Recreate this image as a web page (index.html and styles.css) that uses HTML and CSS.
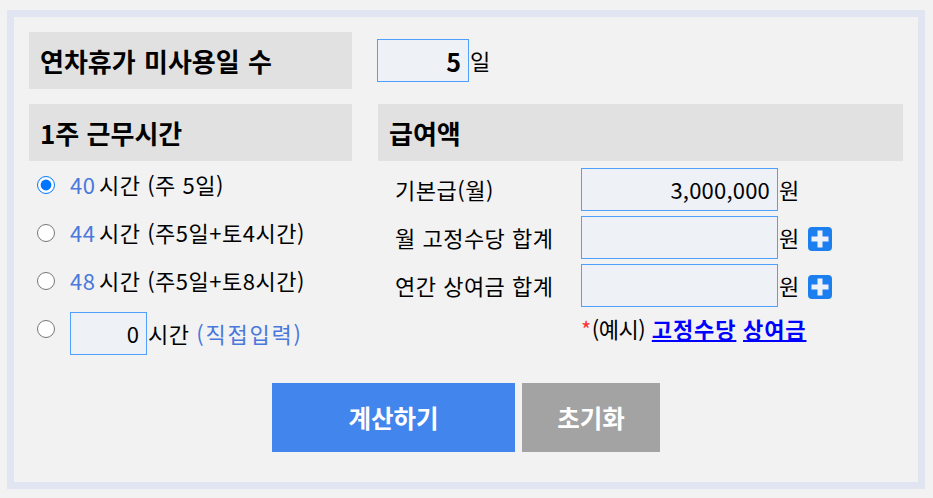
FILE: index.html
```html
<!DOCTYPE html>
<html lang="ko">
<head>
<meta charset="utf-8">
<title>연차수당 계산기</title>
<link rel="stylesheet" href="styles.css">
</head>
<body>
<form class="calc">
  <div class="row-top">
    <h2 class="head head-left">연차휴가 미사용일 수</h2>
    <div class="days"><input class="field field-days" type="text" value="5"><span class="unit">일</span></div>
  </div>
  <div class="columns">
    <section class="col-left">
      <h2 class="head">1주 근무시간</h2>
      <label class="opt"><input class="radio" type="radio" name="h" checked><span class="num">40</span><span class="hrs">시간 (주 5일)</span></label>
      <label class="opt"><input class="radio" type="radio" name="h"><span class="num">44</span><span class="hrs">시간 (주5일+토4시간)</span></label>
      <label class="opt"><input class="radio" type="radio" name="h"><span class="num">48</span><span class="hrs">시간 (주5일+토8시간)</span></label>
      <label class="opt"><input class="radio" type="radio" name="h"><input class="field field-hours" type="text" value="0"><span class="hrs-input">시간 <span class="blue">(직접입력)</span></span></label>
    </section>
    <section class="col-right">
      <h2 class="head">급여액</h2>
      <div class="pay-rows">
        <div class="pay-row"><span class="pay-label">기본급(월)</span><input class="field field-pay" type="text" value="3,000,000"><span class="unit">원</span></div>
        <div class="pay-row"><span class="pay-label">월 고정수당 합계</span><input class="field field-pay" type="text"><span class="unit">원</span>
          <svg class="plus" viewBox="0 0 24 24" aria-hidden="true"><rect width="24" height="24" rx="4" fill="#1c7ff0"/><path d="M9.500 3.500h5v6h6v5h-6v6h-5v-6h-6v-5h6z" fill="#eef1f7"/></svg></div>
        <div class="pay-row"><span class="pay-label">연간 상여금 합계</span><input class="field field-pay" type="text"><span class="unit">원</span>
          <svg class="plus" viewBox="0 0 24 24" aria-hidden="true"><rect width="24" height="24" rx="4" fill="#1c7ff0"/><path d="M9.500 3.500h5v6h6v5h-6v6h-5v-6h-6v-5h6z" fill="#eef1f7"/></svg></div>
      </div>
      <p class="note"><span class="star">*</span><span class="eg">(예시)</span> <a href="#a">고정수당</a> <a href="#b">상여금</a></p>
    </section>
  </div>
  <div class="actions">
    <button class="btn btn-calc" type="button">계산하기</button>
    <button class="btn btn-reset" type="reset">초기화</button>
  </div>
</form>
</body>
</html>
```

FILE: styles.css
```css
* { box-sizing: border-box; }
html, body { margin: 0; padding: 0; }
body {
  background: #f2f2f2;
  padding: 10px 8px 9px 7px;
  font-family: "Noto Sans CJK KR", "Noto Sans", sans-serif;
  font-size: 22px;
  letter-spacing: 0.5px;
  line-height: 1.2;
  color: #000;
}
.calc {
  border: 7px solid #e1e5f2;
  height: 479px;
  padding: 15px 15px 0 15px;
}
.head {
  margin: 0;
  height: 57px;
  background: #e1e1e1;
  padding: 0 11px;
  display: flex;
  align-items: center;
  font-size: 26px;
  font-weight: 700;
  letter-spacing: 0;
}
.row-top { display: flex; align-items: center; }
.head-left { width: 323px; word-spacing: 1px; }
.days { margin-left: 25px; display: flex; align-items: center; }
.field {
  height: 43px;
  border: 1px solid #4f9fff;
  background: #eef1f6;
  text-align: right;
  font: inherit;
  padding: 0 7px;
  color: #000;
  border-radius: 0;
  outline: none;
}
.field-days { width: 92px; font-size: 25px; font-weight: 700; }
.unit { margin-left: 1px; }
.columns { display: flex; gap: 26px; margin-top: 15px; }
.col-left { width: 323px; flex: none; }
.col-right { width: 525px; flex: none; }
.opt { display: flex; align-items: center; height: 48px; padding-left: 8px; }
.radio { width: 18px; height: 18px; margin: 0 15px 0 0; flex: none; accent-color: #0075ff; }
.num { color: #4a78dc; width: 29px; margin-bottom: 2px; }
.hrs { margin-bottom: 2px; }
.field-hours { width: 77px; margin-top: 8px; }
.hrs-input { margin: 8px 0 0 1px; }
.blue { color: #4a78dc; letter-spacing: 1.800px; }
.pay-rows { padding-top: 4px; }
.pay-row { display: flex; align-items: center; height: 48px; padding-left: 17px; }
.pay-label { width: 186px; flex: none; }
.field-pay { width: 197px; letter-spacing: 0.200px; }
.plus { width: 24px; height: 24px; margin: 3px 0 0 8px; }
.note { margin: 6px 0 0; padding-left: 203px; }
.star { color: #f33; }
.eg { letter-spacing: -0.500px; }
.note a { color: #00f; font-weight: 700; letter-spacing: 0.900px; text-decoration: underline; }
.actions { display: flex; justify-content: center; gap: 7px; margin-top: 30px; }
.btn { height: 69px; border: 0; color: #fff; font: inherit; letter-spacing: 0; font-size: 24.500px; font-weight: 700; padding: 0; }
.btn-calc { width: 243px; background: #4285ec; }
.btn-reset { width: 138px; background: #a3a3a3; }
```
